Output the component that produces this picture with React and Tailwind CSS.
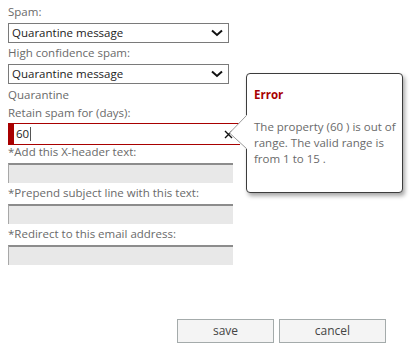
import React from "react";

const font = { fontFamily: '"Open Sans", "Noto Sans", sans-serif' };

const Chevron = () => (
    <svg width="12" height="8" viewBox="0 0 12 8" className="shrink-0">
        <path d="M1 1.5 L6 6 L11 1.5" fill="none" stroke="#111" strokeWidth="2" />
    </svg>
);

const Select = ({ value }) => (
    <div className="flex items-center justify-between h-[20px] w-[221px] border border-[#7a7a7a] bg-white pl-[3px] pr-[5px] text-[11.5px] text-[#222]">
        <span>{value}</span>
        <Chevron />
    </div>
);

const Label = ({ children, className = "" }) => (
    <div className={"text-[11.5px] leading-[20px] text-[#6a6a6a] " + className}>{children}</div>
);

const Disabled = () => (
    <div className="mt-[1px] h-[20px] w-[225px] bg-[#e8e8e8] border-t-2 border-l border-t-[#8c8c8c] border-l-[#a8a8a8]" />
);

export default function App() {
    return (
        <div className="relative w-[411px] h-[347px] bg-white overflow-hidden" style={font}>
            <div className="flex flex-col pl-2 pt-[2px]">
                <Label>Spam:</Label>
                <div className="mt-[1px]"><Select value="Quarantine message" /></div>
                <Label>High confidence spam:</Label>
                <div className="mt-[1px]"><Select value="Quarantine message" /></div>
                <Label className="mt-[1px]">Quarantine</Label>
                <Label className="-mt-[2px]">Retain spam for (days):</Label>
                <div className="flex items-center h-[22px] w-[232px] border-y border-[#a80000] bg-white">
                    <div className="w-[6px] h-full bg-[#a80000]" />
                    <span className="ml-[2px] text-[11.5px] text-[#222]">60</span>
                    <span className="ml-[1px] w-px h-[14px] bg-[#555]" />
                    <div className="flex-1" />
                    <svg width="9" height="9" viewBox="0 0 9 9" className="mr-[7px]">
                        <path d="M1 1 L8 8 M8 1 L1 8" stroke="#111" strokeWidth="1.4" />
                    </svg>
                </div>
                <Label className="-mt-[3px]">*Add this X-header text:</Label>
                <Disabled />
                <Label>*Prepend subject line with this text:</Label>
                <Disabled />
                <Label>*Redirect to this email address:</Label>
                <Disabled />
            </div>

            <div className="flex justify-end gap-[5px] pr-[25px] mt-[54px]">
                <button className="w-[97px] h-[24px] bg-[#f4f4f4] border border-[#a4abab] text-[12px] text-[#444]">save</button>
                <button className="w-[107px] h-[24px] bg-[#f4f4f4] border border-[#a4abab] text-[12px] text-[#444]">cancel</button>
            </div>

            <div className="absolute left-[246px] top-[73px] w-[157px] h-[120px] bg-white border border-[#3c3c3c] rounded-[4px] shadow-[2px_3px_4px_rgba(0,0,0,0.35)] pl-[7px] pt-[12px]">
                <div className="text-[11.5px] font-bold text-[#a80000] leading-[18px]">Error</div>
                <div className="mt-[15px] text-[11.5px] leading-[16px] text-[#6a6a6a]">
                    The property (60 ) is out of<br />range. The valid range is<br />from 1 to 15 .
                </div>
            </div>
            <svg className="absolute left-[228px] top-[114px]" width="20" height="36" viewBox="0 0 20 36">
                <path d="M19 1 L1.5 19 L19 35" fill="white" stroke="#9a9a9a" strokeWidth="1" />
                <rect x="18.5" y="1.5" width="2" height="33" fill="white" />
            </svg>
        </div>
    );
}
